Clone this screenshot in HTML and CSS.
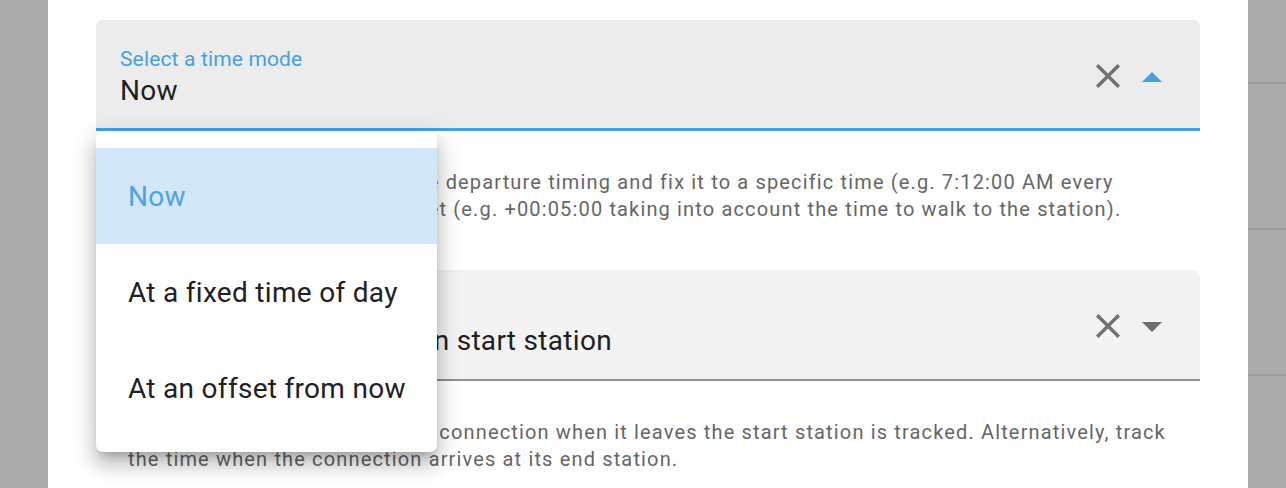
FILE: index.html
```html
<!DOCTYPE html>
<html lang="en">
<head>
<meta charset="utf-8">
<title>Time mode</title>
<link rel="stylesheet" href="styles.css">
</head>
<body>
  <div class="gutter"></div>
  <main class="dialog">
    <div class="form-group">
      <div class="field field--focused">
        <div class="field-body">
          <label class="field-label">Select a time mode</label>
          <div class="field-value">Now</div>
        </div>
        <div class="field-icons">
          <svg class="icon-clear" viewBox="5 5 14 14"><path d="M19 6.41 17.59 5 12 10.59 6.41 5 5 6.41 10.59 12 5 17.59 6.41 19 12 13.41 17.59 19 19 17.59 13.41 12z"/></svg>
          <svg class="icon-arrow icon-arrow--up" viewBox="0 0 20 10"><path d="M0 10 10 0 20 10z"/></svg>
        </div>
      </div>
      <ul class="menu">
        <li class="menu-item menu-item--selected">Now</li>
        <li class="menu-item">At a fixed time of day</li>
        <li class="menu-item">At an offset from now</li>
      </ul>
      <p class="helper">By default, it's now. Change the departure timing and fix it to a specific time (e.g. 7:12:00 AM every morning) or an extra time offset (e.g. +00:05:00 taking into account the time to walk to the station).</p>
    </div>
    <div class="form-group">
      <div class="field">
        <div class="field-body">
          <label class="field-label field-label--idle">Track the time</label>
          <div class="field-value">Use the departure time on start station</div>
        </div>
        <div class="field-icons">
          <svg class="icon-clear" viewBox="5 5 14 14"><path d="M19 6.41 17.59 5 12 10.59 6.41 5 5 6.41 10.59 12 5 17.59 6.41 19 12 13.41 17.59 19 19 17.59 13.41 12z"/></svg>
          <svg class="icon-arrow" viewBox="0 0 20 10"><path d="M0 0 20 0 10 10z"/></svg>
        </div>
      </div>
      <p class="helper">By default the departure of the connection when it leaves the start station is tracked. Alternatively, track the time when the connection arrives at its end station.</p>
    </div>
  </main>
  <div class="backdrop-list">
    <div class="backdrop-row"></div>
    <div class="backdrop-row"></div>
    <div class="backdrop-row"></div>
  </div>
</body>
</html>
```

FILE: styles.css
```css
* { box-sizing: border-box; }

html, body {
  margin: 0;
  height: 488px;
  overflow: hidden;
}

body {
  display: flex;
  background: #acacac;
  font-family: Roboto, "Noto Sans", sans-serif;
}

.gutter {
  width: 48px;
  flex: none;
}

.dialog {
  width: 1200px;
  flex: none;
  background: #ffffff;
  padding: 20px 48px 0;
}

.form-group {
  position: relative;
  margin-bottom: 47px;
}

.field {
  display: flex;
  height: 111px;
  background: #f3f3f3;
  border-radius: 7px 7px 0 0;
  border-bottom: 2px solid #8f8f8f;
  padding: 27px 38px 0 24px;
}

.field--focused {
  background: #ececec;
  border-bottom: 3px solid #47a0e4;
}

.field-body {
  flex: 1;
  display: flex;
  flex-direction: column;
  gap: 4px;
}

.field-label {
  font-size: 21px;
  line-height: 24px;
  color: #47a0e4;
  letter-spacing: 0.15px;
}

.field-label--idle {
  color: #6b6b6b;
}

.field-value {
  font-size: 28px;
  line-height: 32px;
  color: #1f1f1f;
  letter-spacing: 0.3px;
  white-space: nowrap;
}

.field-icons {
  display: flex;
  align-items: center;
  gap: 22px;
  height: 58px;
}

.icon-clear {
  width: 24px;
  height: 24px;
  fill: #717171;
}

.icon-arrow {
  width: 20px;
  height: 10px;
  fill: #6e6e6e;
  margin-top: 2px;
}

.icon-arrow--up {
  fill: #47a0e4;
}

.helper {
  margin: 38px 0 0;
  padding: 0 16px 0 32px;
  font-size: 20px;
  line-height: 27px;
  color: #666666;
  letter-spacing: 1.15px;
}

.menu {
  position: absolute;
  top: 112px;
  left: 0;
  width: 341px;
  margin: 0;
  padding: 16px 0;
  list-style: none;
  background: #ffffff;
  border-radius: 7px;
  box-shadow: 0 8px 9px -5px rgba(0,0,0,.2), 0 14px 17px 2px rgba(0,0,0,.14), 0 5px 24px 4px rgba(0,0,0,.12);
  z-index: 2;
}

.menu-item {
  height: 96px;
  display: flex;
  align-items: center;
  padding: 0 32px;
  font-size: 28px;
  color: #212121;
  letter-spacing: 0.3px;
  white-space: nowrap;
}

.menu-item--selected {
  background: #d3e7f8;
  color: #4ba3e8;
}

.backdrop-list {
  flex: 1;
  padding-top: 82px;
}

.backdrop-row {
  height: 146px;
  border-top: 2px solid #9d9d9d;
}
```
